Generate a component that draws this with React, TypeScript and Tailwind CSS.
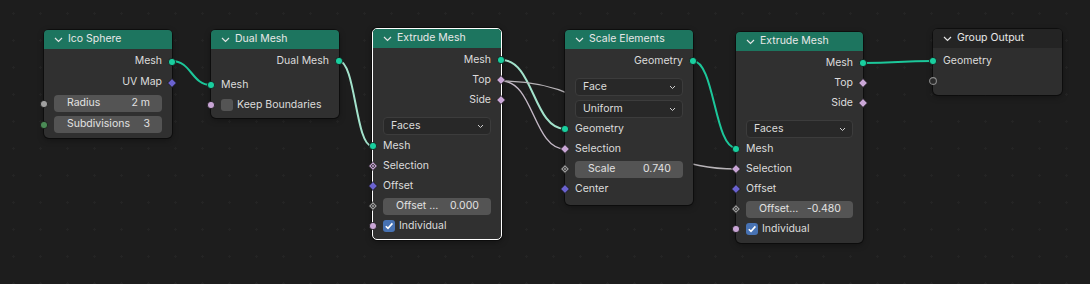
import React from "react";

type SockKind = "circle" | "diamond" | "diamondDot" | "hollow";

const C = {
  geo: "#19cf9f",
  pink: "#c9a6d6",
  blue: "#6a62cf",
  gray: "#a0a0a0",
  green: "#4b8c56",
};

function Socket({ kind, color, side }: { kind: SockKind; color: string; side: "left" | "right" }) {
  return (
    <svg
      width="10"
      height="10"
      viewBox="0 0 10 10"
      className={`absolute top-1/2 -translate-y-1/2 ${side === "left" ? "-left-[5px]" : "-right-[5px]"}`}
    >
      {kind === "circle" && <circle cx="5" cy="5" r="3.6" fill={color} stroke="#151515" strokeWidth="0.8" />}
      {kind === "hollow" && <circle cx="5" cy="5" r="3.4" fill="#2a2a2a" stroke="#8a8a8a" strokeWidth="1.1" />}
      {kind === "diamond" && <path d="M5 0.6 L9.4 5 L5 9.4 L0.6 5 Z" fill={color} stroke="#151515" strokeWidth="0.8" />}
      {kind === "diamondDot" && (
        <>
          <path d="M5 0.6 L9.4 5 L5 9.4 L0.6 5 Z" fill={color} stroke="#151515" strokeWidth="0.8" />
          <path d="M5 2.7 L7.3 5 L5 7.3 L2.7 5 Z" fill="#2b2b2b" />
          <circle cx="5" cy="5" r="1" fill={color} />
        </>
      )}
    </svg>
  );
}

function Header({ title, dark }: { title: string; dark?: boolean }) {
  return (
    <div
      className={`h-[19px] flex items-center pl-[10px] gap-[5px] rounded-t-[4px] text-[#e8e8e8] ${
        dark ? "bg-[#242424]" : "bg-[#1d755f]"
      }`}
    >
      <svg width="9" height="6" viewBox="0 0 9 6">
        <polyline points="1,1 4.5,4.5 8,1" fill="none" stroke="#e4e4e4" strokeWidth="1.2" />
      </svg>
      <span>{title}</span>
    </div>
  );
}

function Out({ label, kind, color }: { label: string; kind: SockKind; color: string }) {
  return (
    <div className="relative h-[20px] flex items-center justify-end pr-[10px]">
      <span>{label}</span>
      <Socket kind={kind} color={color} side="right" />
    </div>
  );
}

function In({ label, kind, color }: { label?: string; kind: SockKind; color: string }) {
  return (
    <div className="relative h-[20px] flex items-center pl-[10px]">
      <span>{label}</span>
      <Socket kind={kind} color={color} side="left" />
    </div>
  );
}

function Field({
  label,
  value,
  kind,
  color,
  h = "h-[20px]",
}: {
  label: string;
  value: string;
  kind: SockKind;
  color: string;
  h?: string;
}) {
  return (
    <div className={`relative ${h} flex items-center px-[10px]`}>
      <Socket kind={kind} color={color} side="left" />
      <div className="flex-1 h-[17px] rounded-[4px] bg-[#545454] flex items-center justify-between pl-[13px] pr-[12px] text-[#e2e2e2]">
        <span>{label}</span>
        <span>{value}</span>
      </div>
    </div>
  );
}

function Dropdown({ label, cls = "" }: { label: string; cls?: string }) {
  return (
    <div className={`h-[20px] flex items-center px-[10px] ${cls}`}>
      <div className="flex-1 h-[18px] rounded-[4px] bg-[#282828] border border-[#3c3c3c] flex items-center justify-between pl-[7px] pr-[6px]">
        <span>{label}</span>
        <svg width="7" height="5" viewBox="0 0 7 5">
          <polyline points="1,1 3.5,3.5 6,1" fill="none" stroke="#d0d0d0" strokeWidth="1" />
        </svg>
      </div>
    </div>
  );
}

function Check({ label, checked, color }: { label: string; checked: boolean; color: string }) {
  return (
    <div className="relative h-[20px] flex items-center pl-[10px] gap-[4px]">
      <Socket kind="circle" color={color} side="left" />
      <div
        className={`w-[12px] h-[12px] rounded-[3px] flex items-center justify-center ${
          checked ? "bg-[#4772b3]" : "bg-[#545454]"
        }`}
      >
        {checked && (
          <svg width="10" height="10" viewBox="0 0 10 10">
            <polyline points="1.8,5.2 4,7.4 8.4,2.4" fill="none" stroke="#ffffff" strokeWidth="1.6" />
          </svg>
        )}
      </div>
      <span>{label}</span>
    </div>
  );
}

function Node({
  x,
  y,
  w,
  children,
  selected,
  bodyCls = "bg-[#303030]",
}: {
  x: number;
  y: number;
  w: number;
  children: React.ReactNode;
  selected?: boolean;
  bodyCls?: string;
}) {
  return (
    <div
      className={`absolute rounded-[5px] shadow-[0_0_0_1px_rgba(0,0,0,0.45),0_2px_6px_rgba(0,0,0,0.35)] ${bodyCls} ${
        selected ? "border border-white" : ""
      }`}
      style={{ left: x, top: y, width: w }}
    >
      {children}
    </div>
  );
}

const link = (x1: number, y1: number, x2: number, y2: number) => {
  const d = Math.max(Math.abs(x2 - x1) * 0.5, 12);
  return `M${x1} ${y1} C${x1 + d} ${y1} ${x2 - d} ${y2} ${x2} ${y2}`;
};

export default function App() {
  return (
    <div className="relative w-[1090px] h-[284px] overflow-hidden bg-[#1d1d1d] bg-[radial-gradient(circle,#242424_1px,transparent_1.3px)] bg-size-[27px_27px] font-['Inter','Noto_Sans',sans-serif] text-[10.5px] text-[#dcdcdc] leading-none">
      <svg className="absolute inset-0" width="1090" height="284">
        <path d={link(172, 61, 211, 85)} fill="none" stroke="#1cc79a" strokeWidth="2" />
        <path d={link(339, 61, 372, 146)} fill="none" stroke="#a3e3cc" strokeWidth="2" />
        <path d={link(502, 60, 565, 129)} fill="none" stroke="#a3e3cc" strokeWidth="2" />
        <path d={link(502, 81, 565, 149)} fill="none" stroke="#c4b8c6" strokeWidth="1.4" />
        <path d={link(502, 81, 736, 169)} fill="none" stroke="#b8b4b8" strokeWidth="1.4" />
        <path d={link(693, 61, 736, 148)} fill="none" stroke="#1cc79a" strokeWidth="2" />
        <path d={link(863, 63, 933, 61)} fill="none" stroke="#1cc79a" strokeWidth="2" />
      </svg>

      <Node x={44} y={30} w={128}>
        <Header title="Ico Sphere" />
        <div className="pt-[2px] pb-[3px]">
          <div className="[&>div]:h-[21px]">
            <Out label="Mesh" kind="circle" color={C.geo} />
            <Out label="UV Map" kind="diamond" color={C.blue} />
          </div>
          <Field label="Radius" value="2 m" kind="circle" color={C.gray} h="h-[21px]" />
          <Field label="Subdivisions" value="3" kind="circle" color={C.green} h="h-[21px]" />
        </div>
      </Node>

      <Node x={211} y={30} w={128}>
        <Header title="Dual Mesh" />
        <div className="pt-[2px] pb-[3px]">
          <Out label="Dual Mesh" kind="circle" color={C.geo} />
          <div className="h-[4px]" />
          <In label="Mesh" kind="circle" color={C.geo} />
          <Check label="Keep Boundaries" checked={false} color={C.pink} />
        </div>
      </Node>

      <Node x={372} y={28} w={130} selected>
        <Header title="Extrude Mesh" />
        <div className="pt-[2px] pb-[3px]">
          <Out label="Mesh" kind="circle" color={C.geo} />
          <Out label="Top" kind="diamond" color={C.pink} />
          <Out label="Side" kind="diamond" color={C.pink} />
          <Dropdown label="Faces" cls="mt-[6px]" />
          <In label="Mesh" kind="circle" color={C.geo} />
          <In label="Selection" kind="diamondDot" color={C.pink} />
          <In label="Offset" kind="diamond" color={C.blue} />
          <Field label="Offset ..." value="0.000" kind="diamondDot" color={C.gray} />
          <Check label="Individual" checked color={C.pink} />
        </div>
      </Node>

      <Node x={565} y={30} w={128}>
        <Header title="Scale Elements" />
        <div className="pt-[2px] pb-[6px]">
          <Out label="Geometry" kind="circle" color={C.geo} />
          <Dropdown label="Face" cls="mt-[6px]" />
          <Dropdown label="Uniform" cls="mt-[2px]" />
          <In label="Geometry" kind="circle" color={C.geo} />
          <In label="Selection" kind="diamond" color={C.pink} />
          <Field label="Scale" value="0.740" kind="diamondDot" color={C.gray} />
          <In label="Center" kind="diamond" color={C.blue} />
        </div>
      </Node>

      <Node x={736} y={32} w={127}>
        <Header title="Extrude Mesh" />
        <div className="pt-[2px] pb-[4px]">
          <Out label="Mesh" kind="circle" color={C.geo} />
          <Out label="Top" kind="diamond" color={C.pink} />
          <Out label="Side" kind="diamond" color={C.pink} />
          <Dropdown label="Faces" cls="mt-[6px]" />
          <In label="Mesh" kind="circle" color={C.geo} />
          <In label="Selection" kind="diamond" color={C.pink} />
          <In label="Offset" kind="diamond" color={C.blue} />
          <Field label="Offset..." value="-0.480" kind="diamondDot" color={C.gray} />
          <Check label="Individual" checked color={C.pink} />
        </div>
      </Node>

      <Node x={933} y={29} w={129} bodyCls="bg-[#2e2e2e]">
        <Header title="Group Output" dark />
        <div className="pt-[3px] pb-[4px]">
          <In label="Geometry" kind="circle" color={C.geo} />
          <In kind="hollow" color={C.gray} />
        </div>
      </Node>
    </div>
  );
}
